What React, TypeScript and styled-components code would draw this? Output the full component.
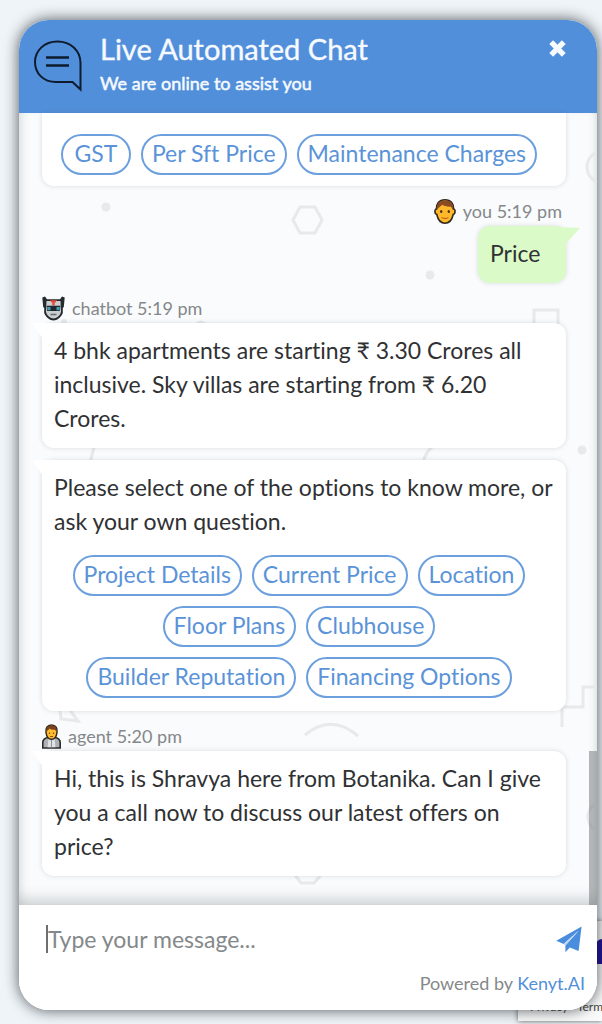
import React from 'react';
import styled, { createGlobalStyle } from 'styled-components';

const GlobalStyle = createGlobalStyle`
  * { box-sizing: border-box; }
  body {
    margin: 0;
    background: #eff4f8;
    color: #303133;
    font-family: Lato, "Liberation Sans", sans-serif;
    font-size: 23px;
    font-variant-ligatures: no-common-ligatures;
    line-height: 34px;
  }
  button, input { font: inherit; font-variant-ligatures: inherit; }
`;

const Page = styled.div`
  position: relative;
  display: flex;
  min-height: 100vh;
  padding: 20px 5px 14px 19px;
  overflow: hidden;
`;

const WidgetShadow = styled.div`
  position: relative;
  display: flex;
  flex: 1;
  min-width: 0;
  border-radius: 30px;
  box-shadow: 0 0 14px 1px rgba(20, 28, 34, 0.65);
`;

const Widget = styled.main`
  position: relative;
  display: flex;
  flex: 1;
  flex-direction: column;
  min-width: 0;
  overflow: hidden;
  border-radius: 30px;
  background: #fff;
`;

const Header = styled.header`
  display: flex;
  align-items: flex-start;
  gap: 18px;
  padding: 11px 31px 18px 15px;
  background: #528fda;
  color: #f6faff;
`;

const HeaderText = styled.div`
  display: flex;
  flex: 1;
  flex-direction: column;
  gap: 4px;
`;

const Title = styled.h1`
  margin: 0;
  font-size: 29px;
  font-weight: 400;
  line-height: 36px;
  -webkit-text-stroke: 0.4px currentColor;
`;

const Subtitle = styled.p`
  margin: 0;
  font-size: 18px;
  line-height: 24px;
  -webkit-text-stroke: 0.5px currentColor;
`;

const IconButton = styled.button`
  display: flex;
  padding: 0;
  border: 0;
  background: none;
  color: inherit;
  cursor: pointer;
`;

const CloseButton = styled(IconButton)`
  padding-top: 9px;
`;

const Conversation = styled.section`
  position: relative;
  flex: 1;
  padding: 0 31px 29px 23px;
  background: #f9fbfc;
  box-shadow: inset 8px 0 10px -6px rgba(60, 70, 75, 0.16),
    inset -8px 0 10px -8px rgba(60, 70, 75, 0.2),
    inset 0 -16px 14px -10px rgba(60, 70, 75, 0.22);
`;

const Doodles = styled.svg`
  position: absolute;
  inset: 0;
  width: 100%;
  height: 100%;
  pointer-events: none;
`;

const ScrollThumb = styled.div`
  position: absolute;
  right: 0;
  bottom: 0;
  width: 8px;
  height: 154px;
  background: rgba(110, 115, 118, 0.5);
`;

const Messages = styled.div`
  position: relative;
  display: flex;
  flex-direction: column;
  gap: 12px;
`;

const MessageGroup = styled.article<{ $own?: boolean }>`
  display: flex;
  flex-direction: column;
  align-items: ${(p) => (p.$own ? 'flex-end' : 'stretch')};
`;

const Meta = styled.div<{ $own?: boolean }>`
  display: flex;
  align-items: center;
  gap: 7px;
  height: 28px;
  padding: 0 ${(p) => (p.$own ? '4px' : '0')} 2px 0;
  color: #85888a;
  font-size: 18px;
  line-height: 24px;
`;

const Bubble = styled.div<{ $own?: boolean; $continued?: boolean }>`
  position: relative;
  min-width: ${(p) => (p.$own ? '88px' : '0')};
  padding: 10px 12px ${(p) => (p.$continued ? '11px' : '13px')};
  border-radius: ${(p) => (p.$continued ? '0 0 12px 12px' : '12px')};
  background: ${(p) => (p.$own ? '#dafac7' : '#fff')};
  box-shadow: 0 0 5px rgba(50, 60, 60, 0.16);

  &::before {
    content: '';
    display: ${(p) => (p.$continued ? 'none' : 'block')};
    position: absolute;
    top: ${(p) => (p.$own ? '1px' : '0')};
    width: 24px;
    height: 18px;
    background: inherit;
    ${(p) =>
      p.$own
        ? 'right: -14px; clip-path: polygon(0 0, 100% 6%, 42% 90%, 0 90%);'
        : 'left: -10px; clip-path: polygon(0 0, 100% 0, 100% 80%, 42% 80%);'}
  }
`;

const Text = styled.p`
  position: relative;
  margin: 0;
`;

const Options = styled.div<{ $top: number }>`
  display: flex;
  flex-wrap: wrap;
  justify-content: center;
  gap: 10px;
  padding: ${(p) => p.$top}px 10px 0 0;
`;

const Option = styled.button`
  min-width: 70px;
  height: 41px;
  padding: 0 9px 3px;
  border: 2px solid #6c9fdd;
  border-radius: 21px;
  background: #fff;
  color: #5a93d8;
  line-height: 34px;
  white-space: nowrap;
  cursor: pointer;
`;

const Footer = styled.footer`
  display: flex;
  flex-direction: column;
  gap: 12px;
  padding: 14px 12px 15px 27px;
  background: #fff;
`;

const Composer = styled.form`
  display: flex;
  align-items: center;
  height: 40px;
  padding-right: 3px;
`;

const Caret = styled.span`
  width: 2px;
  height: 28px;
  background: #6c7073;
`;

const MessageInput = styled.input`
  flex: 1;
  min-width: 0;
  padding: 0;
  border: 0;
  outline: 0;
  background: none;
  color: #303133;

  &::placeholder {
    color: #84888a;
    opacity: 1;
  }
`;

const Powered = styled.p`
  margin: 0;
  color: #85888a;
  font-size: 18px;
  line-height: 24px;
  text-align: right;
`;

const BrandLink = styled.a`
  color: #528fda;
  text-decoration: none;
`;

const PrivacyBadge = styled.aside`
  position: absolute;
  right: 0;
  bottom: 3px;
  display: flex;
  align-items: flex-end;
  width: 84px;
  height: 100px;
  padding: 0 0 5px 12px;
  overflow: hidden;
  background: #fafafa;
  box-shadow: 0 0 5px rgba(60, 60, 60, 0.8);
  font-size: 12px;
  line-height: 18px;
  white-space: nowrap;
`;

const BadgeMark = styled.span`
  position: absolute;
  top: 18px;
  right: 0;
  width: 6px;
  height: 25px;
  border-top-left-radius: 6px;
  background: #20109a;
`;

const BadgeLink = styled.a`
  color: #444;
  text-decoration: none;
`;

const ChatIcon = () => (
  <svg width="48" height="64" viewBox="0 0 48 64" fill="none" stroke="#0d1b2d" strokeWidth="2" aria-hidden="true">
    <path d="M46.500 58.500 38.500 51H22C9 51 1 42 1 31S10 10.500 23.500 10.500 46.500 20 46.500 32V58.500Z" />
    <path d="M12 26.500H35M12 34.500H35" strokeWidth="2.600" />
  </svg>
);

const CloseIcon = () => (
  <svg width="17" height="17" viewBox="0 0 17 17" stroke="currentColor" strokeWidth="5.400" aria-hidden="true">
    <path d="M2.200 2.200 14.800 14.800M14.800 2.200 2.200 14.800" />
  </svg>
);

const PlaneIcon = () => (
  <svg width="26" height="27" viewBox="0 0 26 27" fill="#4a8ddc" aria-hidden="true">
    <path d="M25.600.4.3 14.800 7.600 18 22.800 4.500 9.400 19.500V26.300L13.800 21.600 22.600 25Z" />
    <path d="M22.800 4.500 7.600 18 9.400 19.500Z" fill="#bcd5f4" />
  </svg>
);

const PersonIcon = () => (
  <svg width="22" height="25" viewBox="0 0 22 25" aria-hidden="true">
    <path d="M11 .8C4.800.8 2.200 5 2.400 10 .4 10 .4 15 2.800 15.500 4 21 7 24.200 11 24.200S18 21 19.200 15.500C21.600 15 21.600 10 19.600 10 19.800 5 17.200.8 11 .8Z" fill="#ffb92a" stroke="#352a20" strokeWidth="1.600" />
    <path d="M3 11C2 4.500 5.500 1.400 11 1.400S20 4.500 19 11L17 7.800C13 8 9.500 7 8 5.600 7.500 7.500 4.500 8 3 11Z" fill="#8b4a24" />
    <ellipse cx="7.200" cy="12.500" rx="1.200" ry="1.500" fill="#4e3220" />
    <ellipse cx="14.800" cy="12.500" rx="1.200" ry="1.500" fill="#4e3220" />
    <path d="M7.500 18.500Q11 20.500 14.500 18.500" fill="none" stroke="#c46a18" strokeWidth="1.400" />
  </svg>
);

const RobotIcon = () => (
  <svg width="23" height="25" viewBox="0 0 23 25" aria-hidden="true">
    <path d="M.3 1.500 3 .5 5 3.200H18L20 .5 22.700 1.500 21.800 11 20.800 12V17C19.500 21 15 24.500 11.500 24.500S3.500 21 2.200 17V12L1.200 11Z" fill="#252a2d" />
    <path d="M4.500 5H18.500L19 15.500C18.500 19.500 14.500 22.500 11.500 22.500S4.500 19.500 4 15.500Z" fill="#c9cecf" />
    <path d="M8 4.200H15L13.500 6.500H12.700V9.500H10.300V6.500H9.500Z" fill="#e64b3c" />
    <path d="M4.600 9.800H18.400L17.800 15H5.200Z" fill="#20282e" />
    <path d="M5 11H8.500V14.300H5.600ZM14.500 11H18L17.400 14.300H14.500Z" fill="#439bb4" />
    <path d="M8.500 18.500H14.500" stroke="#666d70" strokeWidth="1.500" />
  </svg>
);

const AgentIcon = () => (
  <svg width="19" height="25" viewBox="0 0 19 25" aria-hidden="true">
    <path d="M.8 24V18.500C.8 15.500 3 14 6 13.500H13C16 14 18.200 15.500 18.200 18.500V24Z" fill="#aeb2b6" stroke="#2d2a2b" strokeWidth="1.600" />
    <path d="M6.500 13.500 9.500 17.500 12.500 13.500 13.500 23.200H5.500Z" fill="#dfe2e4" />
    <path d="M9.500 16V23.500" stroke="#8e9398" />
    <path d="M9.500 1C5 1 3.500 4.500 4 8.500 4.500 12.500 6.500 15.200 9.500 15.200S14.500 12.500 15 8.500C15.500 4.500 14 1 9.500 1Z" fill="#ffbd2c" stroke="#352a20" strokeWidth="1.500" />
    <path d="M4.500 8C4 3.500 6 1.500 9.500 1.500S15 3.500 14.500 8L13 5.800C10.500 6 8.500 5.500 7.500 4.500 7 6 5.500 6 4.500 8Z" fill="#7b4220" />
    <path d="M7.500 8.500V10M11.500 8.500V10M8 12.500H11" stroke="#8a501c" strokeWidth="1.200" />
  </svg>
);

const Pattern = () => (
  <Doodles viewBox="0 0 578 792" preserveAspectRatio="xMidYMin slice" fill="none" stroke="#e7e9ea" strokeWidth="3" aria-hidden="true">
    <path d="M281 94H296L303 107 296 120H281L274 107Z" />
    <path d="M515 197H539V222H515Z" />
    <circle cx="584" cy="54" r="16" />
    <path d="M174 216Q182 202 190 216M75 334 71 350M413 334Q406 340 404 350" />
    <path d="M286 622Q312 600 339 623" />
    <path d="M578 574H564V594H543V614" />
    <path d="M41 596 42 606 59 608 50 596" />
    <path d="M276 762 282 770H295L302 762" />
    <circle cx="584" cy="704" r="15" />
    <g fill="#e7e9ea" stroke="none">
      <circle cx="87" cy="94" r="4.500" />
      <circle cx="411" cy="162" r="4.500" />
      <circle cx="563" cy="337" r="4.500" />
      <circle cx="45" cy="209" r="3" />
    </g>
  </Doodles>
);

const feeOptions = ['GST', 'Per Sft Price', 'Maintenance Charges'];
const topicOptions = [
  'Project Details',
  'Current Price',
  'Location',
  'Floor Plans',
  'Clubhouse',
  'Builder Reputation',
  'Financing Options',
];

export default function App() {
  return (
    <Page>
      <GlobalStyle />
      <PrivacyBadge>
        <BadgeMark />
        <span>
          <BadgeLink href="#privacy">Privacy</BadgeLink> · <BadgeLink href="#terms">Terms</BadgeLink>
        </span>
      </PrivacyBadge>
      <WidgetShadow>
        <Widget>
          <Header>
            <ChatIcon />
            <HeaderText>
              <Title>Live Automated Chat</Title>
              <Subtitle>We are online to assist you</Subtitle>
            </HeaderText>
            <CloseButton type="button" aria-label="Close chat">
              <CloseIcon />
            </CloseButton>
          </Header>
          <Conversation>
            <Pattern />
            <Messages>
              <Bubble $continued>
                <Options $top={11}>
                  {feeOptions.map((label) => (
                    <Option type="button" key={label}>{label}</Option>
                  ))}
                </Options>
              </Bubble>
              <MessageGroup $own>
                <Meta $own>
                  <PersonIcon />
                  <span>you 5:19 pm</span>
                </Meta>
                <Bubble $own>
                  <Text>Price</Text>
                </Bubble>
              </MessageGroup>
              <MessageGroup>
                <Meta>
                  <RobotIcon />
                  <span>chatbot 5:19 pm</span>
                </Meta>
                <Bubble>
                  <Text>
                    4 bhk apartments are starting ₹ 3.30 Crores all inclusive. Sky villas are starting from ₹ 6.20
                    Crores.
                  </Text>
                </Bubble>
              </MessageGroup>
              <Bubble>
                <Text>Please select one of the options to know more, or ask your own question.</Text>
                <Options $top={17}>
                  {topicOptions.map((label) => (
                    <Option type="button" key={label}>{label}</Option>
                  ))}
                </Options>
              </Bubble>
              <MessageGroup>
                <Meta>
                  <AgentIcon />
                  <span>agent 5:20 pm</span>
                </Meta>
                <Bubble>
                  <Text>
                    Hi, this is Shravya here from Botanika. Can I give you a call now to discuss our latest offers on
                    price?
                  </Text>
                </Bubble>
              </MessageGroup>
            </Messages>
            <ScrollThumb />
          </Conversation>
          <Footer>
            <Composer onSubmit={(e) => e.preventDefault()}>
              <Caret />
              <MessageInput type="text" aria-label="Message" placeholder="Type your message..." />
              <IconButton type="submit" aria-label="Send message">
                <PlaneIcon />
              </IconButton>
            </Composer>
            <Powered>
              Powered by <BrandLink href="#kenyt">Kenyt.AI</BrandLink>
            </Powered>
          </Footer>
        </Widget>
      </WidgetShadow>
    </Page>
  );
}
